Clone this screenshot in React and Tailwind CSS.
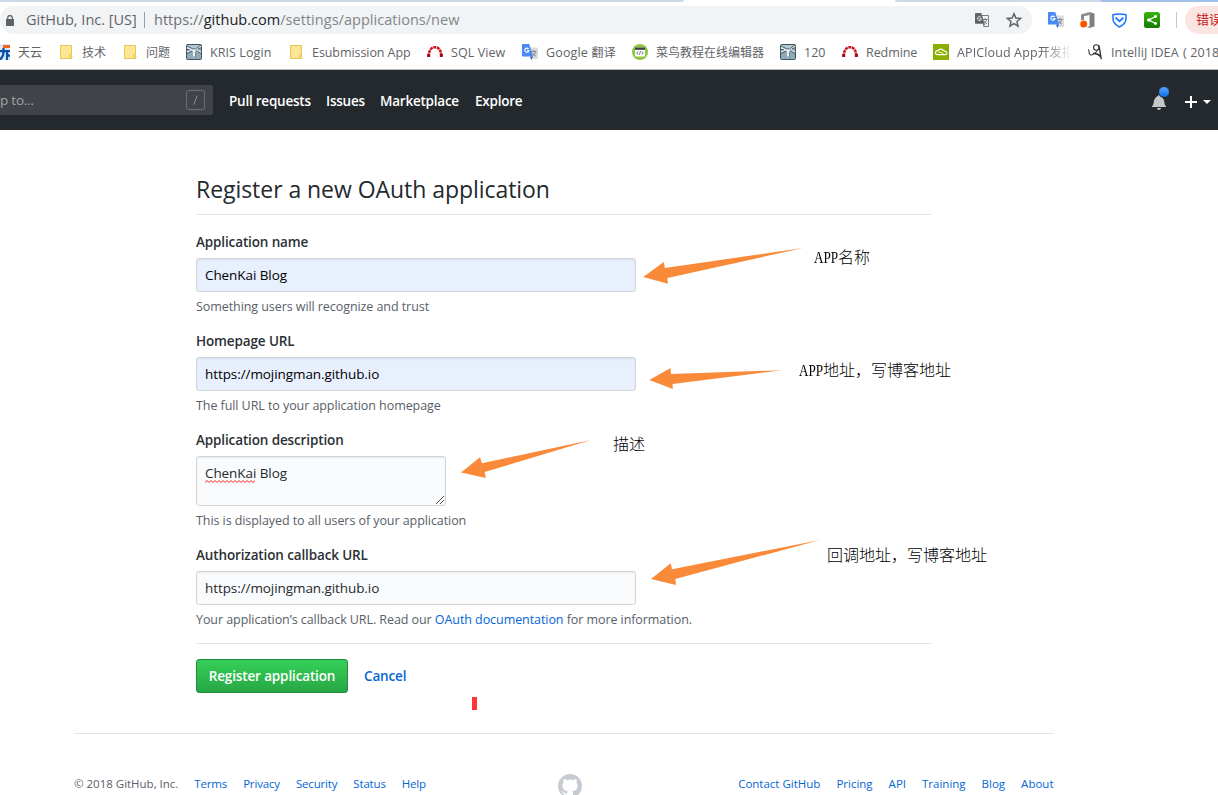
import React from 'react';

const sans = "font-['Open_Sans','Noto_Sans_CJK_SC',sans-serif]";

/* ---------- icons ---------- */

function FolderIcon() {
  return (
    <svg className="size-4 shrink-0" viewBox="0 0 16 16">
      <path d="M2.5 1.5h11v9.5l.2 3.5H2.5z" fill="#ffe695" stroke="#e8c558" />
      <path d="M11.5 14v-3.5h2.3V14z" fill="#ffe07a" stroke="#e8c558" strokeWidth=".8" />
    </svg>
  );
}

function CardIcon() {
  return (
    <svg className="size-4 shrink-0" viewBox="0 0 16 16">
      <rect width="16" height="16" fill="#dfe9f7" />
      <path d="M9 1h7v3H9z" fill="#f2641c" />
      <path d="M5 7.200h11M9.500 4v4q0 5-4 8M13 8v8M13.500 10.500l2.500 2" stroke="#0b4ea8" strokeWidth="2.200" fill="none" />
    </svg>
  );
}

function KrisIcon() {
  return (
    <svg className="size-4 shrink-0" viewBox="0 0 16 16">
      <rect x=".5" y=".5" width="15" height="15" rx="1" fill="#8fabb8" stroke="#40525c" />
      <path d="M1 1h14v4L8 6 1 4z" fill="#b4c7d0" />
      <path d="M1 3.500L7 6l8-4M1 8l6-2.500L15 8" stroke="#e8f0f3" strokeWidth="1.600" fill="none" />
      <path d="M1 2l5.500 2.800h3L15 1M1 9.500l5-2.500M10 6.500l5 3M1 5.500l3 .5M12 4.500l3-.5" stroke="#3f4f59" strokeWidth=".9" fill="none" />
      <path d="M7 6h2v6l-1 .8-1-.8z" fill="#eef4f6" />
      <path d="M9.500 8v5" stroke="#5d7683" strokeWidth=".8" />
    </svg>
  );
}

function RedmineIcon() {
  return (
    <svg className="size-4 shrink-0" viewBox="0 0 16 16">
      <path d="M1.700 12.500C1.700 6.500 4.400 3.200 8 3.200s6.300 3.300 6.300 9.300" fill="none" stroke="#cf131c" strokeWidth="2.500" strokeDasharray="2.900 .7" />
      <path d="M.2 10h3v2.900h-3zM12.800 10h3v2.900h-3z" fill="#9c0d12" />
    </svg>
  );
}

function TranslateIcon() {
  return (
    <svg className="size-4 shrink-0" viewBox="0 0 16 16">
      <path d="M6 3.500h9.200a.8.800 0 0 1 .8.800v10a.8.800 0 0 1-.8.800H10z" fill="#dcdcdc" />
      <path d="M9 7.500h5.500M11.800 6v1.500M13.600 7.500c-.5 2.200-1.800 3.600-3.300 4.400M10.600 9c.8 1.500 2 2.600 3.400 3.200" stroke="#7f868c" strokeWidth="1" fill="none" />
      <path d="M8 12.500h3L9.300 16z" fill="#2a56c6" />
      <path d="M.8 0h6.400l3.900 12.500H.8a.8.800 0 0 1-.8-.8V.8A.8.800 0 0 1 .8 0z" fill="#4a8af4" />
      <path d="M6.600 4.900a2.100 2.100 0 1 0 .4 1.700H5" stroke="#fff" strokeWidth="1.100" fill="none" />
    </svg>
  );
}

function TranslateMonoIcon() {
  return (
    <svg className="h-[14px] w-[14px]" viewBox="0 0 14 14">
      <path d="M5 2.500h8.500v11H8.500" fill="#f1f3f4" stroke="#7a7e83" />
      <path d="M7.800 6.500h4.700M10.200 5v1.500M11.700 6.500c-.4 2-1.700 3.500-3 4.300M9 8c.7 1.300 1.700 2.300 3 2.900" stroke="#6b6f75" strokeWidth=".9" fill="none" />
      <path d="M.7 0h5.600l3.200 10.800H.7A.7.700 0 0 1 0 10.100V.7A.7.700 0 0 1 .7 0z" fill="#5f6368" />
      <path d="M8 11h2l-1.300 2.400z" fill="#5f6368" />
      <path d="M5.900 4.300A1.900 1.900 0 1 0 6.300 5.800H4.500" stroke="#f1f3f4" strokeWidth="1" fill="none" />
    </svg>
  );
}

function RunoobIcon() {
  return (
    <svg className="size-4 shrink-0" viewBox="0 0 16 16">
      <circle cx="8" cy="8" r="8" fill="#8cc63f" />
      <rect x="3" y="3.500" width="10" height="9" rx=".8" fill="#fff" />
      <path d="M3 3.500h10v2.300H3z" fill="#36424a" />
      <path d="M6.200 7.500L4.700 9l1.500 1.500M9.800 7.500L11.300 9l-1.500 1.500M8.600 7.300l-1.200 3.400" stroke="#55626a" strokeWidth=".9" fill="none" />
    </svg>
  );
}

function ApiCloudIcon() {
  return (
    <svg className="size-4 shrink-0" viewBox="0 0 16 16">
      <rect width="16" height="16" fill="#8aae00" />
      <path d="M4 10.700h8.200a1.600 1.600 0 0 0 .2-3.200 2 2 0 0 0-2-.9 2.900 2.900 0 0 0-5.200.1 2 2 0 0 0-1.200 4z" fill="none" stroke="#fff" strokeWidth="1.200" />
      <path d="M5.500 8.300c1.600-.3 4-.2 4.800 2.200" fill="none" stroke="#fff" strokeWidth="1" />
    </svg>
  );
}

function SketchIcon() {
  return (
    <svg className="size-4 shrink-0" viewBox="0 0 16 16">
      <path d="M1 5.500q1 0 1 2.200.3 3.300 2.200 3.300 2.300 0 6.300-4.500" fill="none" stroke="#333" strokeWidth="1.100" />
      <circle cx="9.300" cy="3.500" r="2.700" fill="none" stroke="#333" strokeWidth="1.100" />
      <path d="M12 1.500q1 6 2.200 13.700M6 9.500q4.500-.5 7.500 3" fill="none" stroke="#333" strokeWidth="1.400" />
    </svg>
  );
}

function OfficeIcon() {
  return (
    <svg className="h-4 w-[15px]" viewBox="0 0 15 16">
      <path d="M1 2.500L9.500 0v3L4 4.300V8H1z" fill="#8a8a8a" />
      <path d="M9.500 0l5 1.500v13L9.500 16l-3-1 3-.6z" fill="#808080" />
      <circle cx="3.700" cy="12" r="3.500" fill="#fa5400" />
    </svg>
  );
}

function ShieldIcon() {
  return (
    <svg className="h-[15px] w-[15px]" viewBox="0 0 15 15">
      <path d="M1 1.800Q7.500.2 14 1.800V6q0 4.500-6.500 8Q1 10.500 1 6z" fill="#fff" stroke="#1677ff" strokeWidth="1.500" />
      <path d="M3.600 4.600l3.900 3.600 3.900-3.600" fill="none" stroke="#1677ff" strokeWidth="1.900" />
    </svg>
  );
}

function ShareIcon() {
  return (
    <svg className="size-4" viewBox="0 0 16 16">
      <defs>
        <linearGradient id="share" x2="0" y2="1">
          <stop stopColor="#37b60c" />
          <stop offset="1" stopColor="#147a05" />
        </linearGradient>
      </defs>
      <rect width="16" height="16" rx="2.500" fill="url(#share)" />
      <path d="M11.500 4.500L5 8l6.500 3.500" fill="none" stroke="#fff" strokeWidth="1.300" />
      <circle cx="11.500" cy="4.500" r="1.400" fill="#fff" />
      <circle cx="4.800" cy="8" r="1.800" fill="#fff" />
      <circle cx="11.500" cy="11.500" r="1.400" fill="#fff" />
    </svg>
  );
}

/* ---------- browser chrome ---------- */

function TabStrip() {
  return (
    <div className="flex h-[6px] items-start">
      <div className="h-[2px] w-[684px] rounded-br-[3px] bg-[#cdd8e8]" />
      <div className="ml-[211px] h-[2px] w-[205px] rounded-bl-[3px] bg-[#cdd8e8]" />
      <div className="h-[2px] flex-1 rounded-bl-[3px] bg-[#a3c0ea]" />
    </div>
  );
}

function Toolbar() {
  return (
    <div className="flex h-7 items-center">
      <div className="flex h-7 w-[1032px] items-center rounded-full bg-[#f1f3f4] text-[14.5px] leading-7">
        <svg className="ml-[6px] h-[11px] w-2" viewBox="0 0 8 11">
          <path d="M0 4h8v7H0z" fill="#5f6368" />
          <path d="M1.700 4.500V2.800a2.300 2.300 0 0 1 4.600 0v1.700" fill="none" stroke="#5f6368" strokeWidth="1.300" />
        </svg>
        <span className="ml-3 w-[118px] whitespace-nowrap text-[#5f6368]">GitHub, Inc. [US]</span>
        <div className="h-4 w-px bg-[#9a9da1]" />
        <span className="ml-[9px] whitespace-nowrap tracking-[0.03px] text-[#80868b]">
          <span className="text-[#6b7076]">https://</span>
          <span className="text-[#202124]">github.com</span>/settings/applications/new
        </span>
        <div className="ml-auto mr-[10px] flex items-center gap-[17px]">
          <TranslateMonoIcon />
          <svg className="h-4 w-4" viewBox="0 0 16 16">
            <path d="M8 1.700l1.850 4.350 4.700.4-3.570 3.100 1.070 4.600L8 11.700l-4.050 2.450 1.070-4.600-3.570-3.100 4.700-.4z" fill="none" stroke="#5f6368" strokeWidth="1.500" />
          </svg>
        </div>
      </div>
      <div className="ml-4 flex items-center">
        <TranslateIcon />
        <div className="ml-4"><OfficeIcon /></div>
        <div className="ml-[17px]"><ShieldIcon /></div>
        <div className="ml-[17px]"><ShareIcon /></div>
      </div>
      <div className="ml-4 h-4 w-px bg-[#c4c7ca]" />
      <div className="ml-2 flex h-7 flex-1 items-center overflow-hidden rounded-l-full bg-[#fbe5e3] pl-[11px]">
        <span className="whitespace-nowrap text-[13px] text-[#c5221f]">错误</span>
      </div>
    </div>
  );
}

function Bookmark({ icon, width, tracking = '', children }) {
  return (
    <div className={`flex shrink-0 items-center gap-2 ${width}`}>
      {icon}
      <span className={`whitespace-nowrap pt-[2px] leading-5 ${tracking}`}>{children}</span>
    </div>
  );
}

const Cjk = ({ children }) => <span className="text-[12px]">{children}</span>;

function BookmarksBar() {
  return (
    <div className="flex h-[36px] items-center overflow-hidden border-b border-[#b3b5b7] pt-px text-[12.5px] text-[#5f6368]">
      <div className="-ml-[6px] flex items-center">
        <Bookmark icon={<CardIcon />} width="w-[64px]"><Cjk>天云</Cjk></Bookmark>
        <Bookmark icon={<FolderIcon />} width="w-[64px]"><Cjk>技术</Cjk></Bookmark>
        <Bookmark icon={<FolderIcon />} width="w-[64px]"><Cjk>问题</Cjk></Bookmark>
        <Bookmark icon={<KrisIcon />} width="w-[102px]" tracking="tracking-[0.08px]">KRIS Login</Bookmark>
        <Bookmark icon={<FolderIcon />} width="w-[139px]" tracking="tracking-[-0.07px]">Esubmission App</Bookmark>
        <Bookmark icon={<RedmineIcon />} width="w-[95px]" tracking="tracking-[0.08px]">SQL View</Bookmark>
        <Bookmark icon={<TranslateIcon />} width="w-[110px]" tracking="tracking-[0.16px]">Google <Cjk>翻译</Cjk></Bookmark>
        <Bookmark icon={<RunoobIcon />} width="w-[148px]"><Cjk>菜鸟教程在线编辑器</Cjk></Bookmark>
        <Bookmark icon={<KrisIcon />} width="w-[62px]">120</Bookmark>
        <Bookmark icon={<RedmineIcon />} width="w-[91px]" tracking="tracking-[-0.08px]">Redmine</Bookmark>
        <Bookmark
          icon={<ApiCloudIcon />}
          width="w-[154px]"
          tracking="tracking-[0.12px] w-[119px] overflow-hidden [mask-image:linear-gradient(to_right,black_86px,transparent_115px)]"
        >
          APICloud App<Cjk>开发指</Cjk>
        </Bookmark>
        <Bookmark icon={<SketchIcon />} width="w-[140px]" tracking="tracking-[0.12px]">
          IntelliJ IDEA <span className="pl-px">( 2018</span>
        </Bookmark>
      </div>
    </div>
  );
}

/* ---------- site ---------- */

function SiteHeader() {
  return (
    <header className="flex h-[60px] items-center bg-[#24292e] text-[13.5px] font-semibold tracking-[-0.23px] text-white">
      <div className="flex h-[30px] w-[213px] items-center justify-between rounded-r-[3px] bg-[#404448] pr-2">
        <span className="pt-px font-normal text-[#a0a3a6]">p to...</span>
        <span className="flex h-5 w-[19px] items-center justify-center rounded-[3px] border border-[#6c7074]">
          <svg className="h-[10px] w-[5px]" viewBox="0 0 5 10">
            <path d="M.7 9.500L4.300.5" stroke="#8d9093" strokeWidth="1" />
          </svg>
        </span>
      </div>
      <nav className="ml-4 flex pt-[2px]">
        <a className="w-[97px]">Pull requests</a>
        <a className="w-[54px]">Issues</a>
        <a className="w-[95px]">Marketplace</a>
        <a>Explore</a>
      </nav>
      <div className="ml-auto mr-[7px] flex items-center">
        <div className="relative mt-[4px] h-4 w-[14px]">
          <svg className="h-4 w-[14px]" viewBox="0 0 14 16">
            <path
              fill="#c4c6c8"
              d="M14 12v1H0v-1l.73-.58c.77-.77.81-2.55 1.190-4.420C2.690 3.230 6 2 6 2c0-.55.45-1 1-1s1 .45 1 1c0 0 3.390 1.230 4.160 5 .38 1.880.42 3.660 1.190 4.420l.66.58H14zm-7 4c1.110 0 2-.89 2-2H5c0 1.110.89 2 2 2z"
            />
          </svg>
          <span className="absolute -right-[4px] -top-[8px] size-[12px] rounded-full border border-[#24292e] bg-gradient-to-b from-[#54a3ff] to-[#006eed]" />
        </div>
        <svg className="ml-[19px] mt-[4px] size-3" viewBox="0 0 12 12">
          <path d="M6 0v12M0 6h12" stroke="#fff" strokeWidth="2" />
        </svg>
        <div className="ml-[6px] mt-[4px] border-x-4 border-t-4 border-x-transparent border-t-white" />
      </div>
    </header>
  );
}

function Field({ label, note, children }) {
  return (
    <div className="mb-[14px]">
      <label className="block h-5 text-[13.5px] font-semibold leading-5 tracking-[-0.13px] text-[#2b3035]">{label}</label>
      <div className="mt-[6px] flex">{children}</div>
      <p className="mt-[5px] h-5 whitespace-nowrap text-[12.5px] leading-5 tracking-[-0.07px] text-[#586069]">{note}</p>
    </div>
  );
}

const control =
  'block rounded-[3px] border border-[#d1d5da] px-2 text-[13.5px] tracking-[-0.08px] shadow-[inset_0_1px_2px_rgba(27,31,35,0.075)] outline-none';

function Squiggle() {
  const points = Array.from({ length: 26 }, (_, i) => `${i * 2},${i % 2 ? 0.6 : 2.4}`).join(' ');
  return (
    <svg className="absolute left-[9px] top-[24px] h-[3px] w-[50px]" viewBox="0 0 50 3">
      <polyline points={points} fill="none" stroke="#f0302c" strokeWidth="1" />
    </svg>
  );
}

function RegisterForm() {
  return (
    <form className="ml-[196px] w-[735px]">
      <h1 className="mb-[17px] h-[85px] border-b border-[#e1e4e8] pt-[42px] text-[23px] font-normal leading-[34px] tracking-[-0.05px] text-[#24292e]">
        Register a new OAuth application
      </h1>
      <Field label="Application name" note="Something users will recognize and trust">
        <input className={`${control} h-[34px] w-[440px] bg-[#e8f0fe] text-black`} defaultValue="ChenKai Blog" />
      </Field>
      <Field label="Homepage URL" note="The full URL to your application homepage">
        <input className={`${control} h-[34px] w-[440px] bg-[#e8f0fe] text-black`} defaultValue="https://mojingman.github.io" />
      </Field>
      <Field label="Application description" note="This is displayed to all users of your application">
        <div className="relative">
          <textarea
            spellCheck={false}
            className={`${control} h-[50px] w-[250px] resize-none bg-[#fafbfc] pt-[6px] leading-5 text-[#24292e]`}
            defaultValue="ChenKai Blog"
          />
          <Squiggle />
          <svg className="absolute bottom-[2px] right-[2px] size-2" viewBox="0 0 8 8">
            <path d="M0 8L8 0M4 8l4-4" stroke="#555" strokeWidth="1" />
          </svg>
        </div>
      </Field>
      <Field
        label="Authorization callback URL"
        note={
          <>
            Your application’s callback URL. Read our <a className="text-[#0366d6]">OAuth documentation</a> for more information.
          </>
        }
      >
        <input className={`${control} h-[34px] w-[440px] bg-[#fafbfc] text-[#24292e]`} defaultValue="https://mojingman.github.io" />
      </Field>
      <div className="-mt-px flex items-center border-t border-[#e1e4e8] pt-[15px] text-[13.5px] font-semibold tracking-[-0.14px]">
        <button
          type="button"
          className="h-[34px] w-[152px] whitespace-nowrap rounded-[3px] border border-[#288a41] bg-gradient-to-b from-[#34d058] to-[#28a745] text-white"
        >
          Register application
        </button>
        <a className="ml-4 text-[#0366d6]">Cancel</a>
      </div>
    </form>
  );
}

function Footer() {
  return (
    <footer className="ml-[74px] mt-10 flex w-[980px] items-start justify-between border-t border-[#e1e4e8] pt-10 text-[11.5px] leading-5 text-[#0366d6]">
      <div className="flex w-[484px] gap-4 whitespace-nowrap tracking-[-0.17px]">
        <span className="tracking-[-0.01px] text-[#586069]">© 2018 GitHub, Inc.</span>
        <a>Terms</a>
        <a>Privacy</a>
        <a>Security</a>
        <a>Status</a>
        <a>Help</a>
      </div>
      <svg className="size-6 shrink-0" viewBox="0 0 16 16">
        <path
          fill="#c6cbd1"
          fillRule="evenodd"
          d="M8 0C3.58 0 0 3.58 0 8c0 3.54 2.29 6.53 5.47 7.59.4.07.55-.17.55-.38 0-.19-.01-.82-.01-1.49-2.01.37-2.53-.49-2.69-.94-.09-.23-.48-.94-.82-1.13-.28-.15-.68-.52-.01-.53.63-.01 1.08.58 1.23.82.72 1.21 1.87.87 2.33.66.07-.52.28-.87.51-1.07-1.78-.2-3.64-.89-3.64-3.95 0-.87.31-1.59.82-2.15-.08-.2-.36-1.02.08-2.12 0 0 .67-.21 2.2.82.64-.18 1.32-.27 2-.27.68 0 1.36.09 2 .27 1.53-1.04 2.2-.82 2.2-.82.44 1.1.16 1.92.08 2.12.51.56.82 1.27.82 2.15 0 3.07-1.87 3.75-3.65 3.95.29.25.54.73.54 1.48 0 1.07-.01 1.93-.01 2.2 0 .21.15.46.55.38A8.013 8.013 0 0 0 16 8c0-4.42-3.58-8-8-8z"
        />
      </svg>
      <div className="mr-[0.5px] flex flex-1 justify-end gap-4 whitespace-nowrap">
        <a>Contact GitHub</a>
        <a>Pricing</a>
        <a>API</a>
        <a>Training</a>
        <a>Blog</a>
        <a>About</a>
      </div>
    </footer>
  );
}

/* ---------- hand-placed annotations over the page ---------- */

const arrows = [
  '643.3,277 663.7,262 664.9,268 803,248 667.500,278 667.800,283.700',
  '649.300,380 670.500,368 671,374 782,370.200 672.600,384 672.800,389',
  '461,472.500 480,457.300 482,463.300 591,440 484.700,472 485.700,478',
  '651,579 670.700,563.300 672,569.300 820,540 675.300,579 676,584.900',
];

const noteText =
  "absolute whitespace-nowrap text-[16px] leading-5 font-light text-black font-['Noto_Sans_CJK_SC',sans-serif]";

const AppWord = () => (
  <span className="inline-block w-6 origin-left scale-x-[0.82] font-['Liberation_Serif',serif]">APP</span>
);

function Annotations() {
  return (
    <>
      <svg className="pointer-events-none absolute left-0 top-0 h-[795px] w-[1218px]" viewBox="0 0 1218 795">
        {arrows.map((points) => (
          <polygon key={points} points={points} fill="#f88a3a" />
        ))}
      </svg>
      <div className={`${noteText} left-[814px] top-[246px]`}><AppWord />名称</div>
      <div className={`${noteText} left-[799px] top-[359px]`}><AppWord />地址，写博客地址</div>
      <div className={`${noteText} left-[613px] top-[433px]`}>描述</div>
      <div className={`${noteText} left-[827px] top-[544px]`}>回调地址，写博客地址</div>
      <div className="absolute left-[472px] top-[697px] h-[13px] w-[5px] bg-[#ff3636]" />
    </>
  );
}

export default function App() {
  return (
    <div className={`relative h-[795px] w-[1218px] overflow-hidden bg-white ${sans}`}>
      <TabStrip />
      <Toolbar />
      <BookmarksBar />
      <SiteHeader />
      <RegisterForm />
      <Footer />
      <Annotations />
    </div>
  );
}
